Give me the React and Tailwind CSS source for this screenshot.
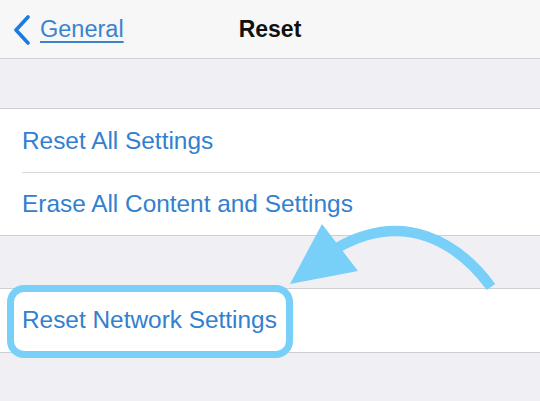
import React from 'react';

const rowText = 'text-[24.4px] text-[#3280cf] leading-none';

const Row = ({ label, divider, height }) => (
  <div className={`relative ${height} bg-white flex items-center pl-[22px]`}>
    <span className={rowText}>{label}</span>
    {divider && <div className="absolute left-[22px] right-0 bottom-0 h-px bg-[#d8d8dc]" />}
  </div>
);

const App = () => {
  return (
    <div className="relative w-[540px] h-[401px] overflow-hidden bg-[#efeff4] font-['Liberation_Sans',Arial,sans-serif]">
      {/* Navigation bar */}
      <div className="relative h-[59px] bg-[#f7f7f8] border-b border-[#cfcfd3] flex items-center">
        <div className="flex items-center pl-[12px] pt-[2px]">
          <svg width="20" height="30" viewBox="0 0 20 30" className="mr-[8px]">
            <path d="M16 2 L4 15 L16 28" fill="none" stroke="#1d7be0" strokeWidth="3.6" strokeLinecap="round" strokeLinejoin="round" />
          </svg>
          <span className="text-[23.5px] leading-none text-[#3a83cf] underline underline-offset-[4px] decoration-[1.5px]">General</span>
        </div>
        <div className="absolute inset-0 flex items-center justify-center pointer-events-none">
          <span className="text-[23px] font-bold leading-none text-[#111] pt-[1px]">Reset</span>
        </div>
      </div>

      {/* Group 1 */}
      <div className="mt-[49px] border-y border-[#cfcfd3]">
        <Row label="Reset All Settings" height="h-[64px]" divider />
        <Row label="Erase All Content and Settings" height="h-[62px]" />
      </div>

      {/* Group 2 */}
      <div className="mt-[52px] border-y border-[#cfcfd3]">
        <Row label="Reset Network Settings" height="h-[63px]" />
      </div>

      {/* Highlight around the network reset row */}
      <div className="absolute left-[7px] top-[285px] w-[286px] h-[73px] rounded-[17px] border-[7px] border-[#78d0f8]" />

      {/* Curved pointer arrow */}
      <svg className="absolute inset-0 pointer-events-none" width="540" height="401" viewBox="0 0 540 401">
        <path d="M491 287 C458 242 404 210 337 248" fill="none" stroke="#78d0f8" strokeWidth="10.5" />
        <polygon points="322,224 290,284 358,271" fill="#78d0f8" />
      </svg>
    </div>
  );
};

export default App;
